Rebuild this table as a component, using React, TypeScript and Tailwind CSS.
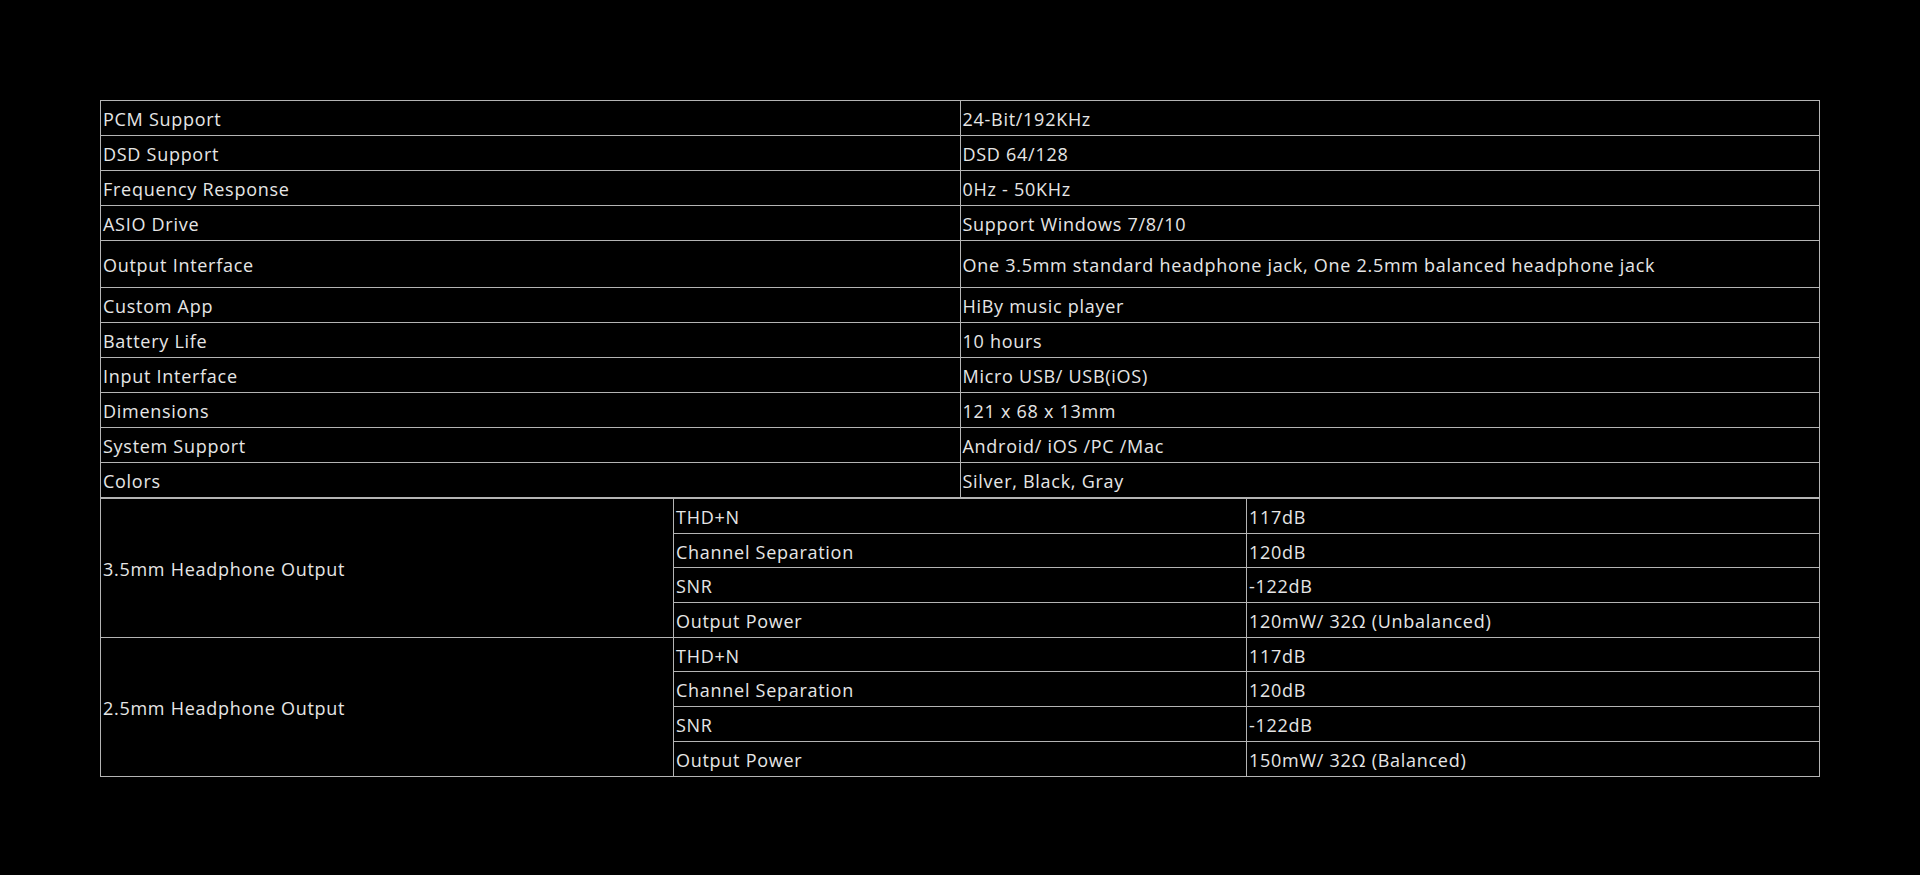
const specs: [string, string][] = [
	["PCM Support", "24-Bit/192KHz"],
	["DSD Support", "DSD 64/128"],
	["Frequency Response", "0Hz - 50KHz"],
	["ASIO Drive", "Support Windows 7/8/10"],
	["Output Interface", "One 3.5mm standard headphone jack, One 2.5mm balanced headphone jack"],
	["Custom App", "HiBy music player"],
	["Battery Life", "10 hours"],
	["Input Interface", "Micro USB/ USB(iOS)"],
	["Dimensions", "121 x 68 x 13mm"],
	["System Support", "Android/ iOS /PC /Mac"],
	["Colors", "Silver, Black, Gray"]
]

const outputs = [
	{
		name: "3.5mm Headphone Output",
		rows: [
			["THD+N", "117dB"],
			["Channel Separation", "120dB"],
			["SNR", "-122dB"],
			["Output Power", "120mW/ 32Ω (Unbalanced)"]
		]
	},
	{
		name: "2.5mm Headphone Output",
		rows: [
			["THD+N", "117dB"],
			["Channel Separation", "120dB"],
			["SNR", "-122dB"],
			["Output Power", "150mW/ 32Ω (Balanced)"]
		]
	}
]

const cell = "border border-[#b4b4b4] pl-[2px] pr-[2px] pt-[2px] align-middle"

export default function App() {
	return (
		<div
			className="min-h-screen bg-black px-[100px] pt-[100px] text-[18px] leading-none tracking-[0.04em] text-[#e6e6e6]"
			style={{ fontFamily: '"Open Sans", "Noto Sans", sans-serif' }}
		>
			<table className="w-full table-fixed border-collapse">
				<tbody>
					{specs.map(([label, value]) => (
						<tr key={label} className={label === "Output Interface" ? "h-[47px]" : "h-[35px]"}>
							<td className={cell}>{label}</td>
							<td className={cell}>{value}</td>
						</tr>
					))}
				</tbody>
			</table>
			<table className="w-full table-fixed border-collapse">
				<tbody>
					{outputs.map((group) =>
						group.rows.map(([label, value], i) => (
							<tr key={group.name + label} className="h-[34.7px]">
								{i === 0 ? (
									<td rowSpan={4} className={cell}>
										{group.name}
									</td>
								) : null}
								<td className={cell}>{label}</td>
								<td className={cell}>{value}</td>
							</tr>
						))
					)}
				</tbody>
			</table>
		</div>
	)
}
